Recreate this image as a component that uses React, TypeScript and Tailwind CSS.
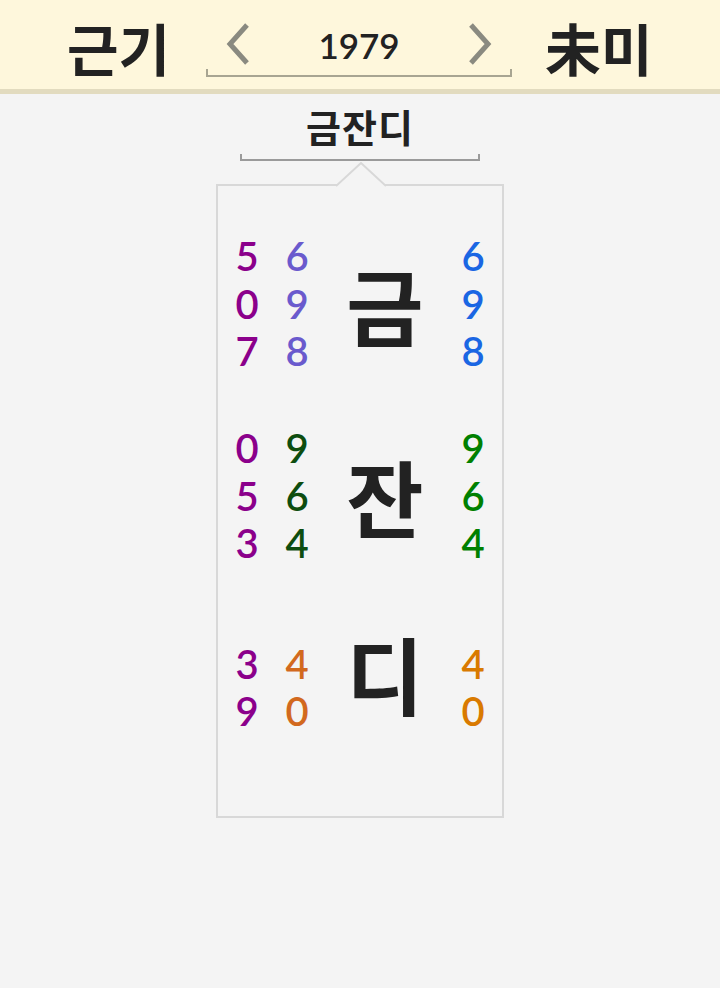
import React from "react";

type Syllable = {
  char: string;
  left: string[];
  mid: string[];
  right: string[];
  midColor: string;
  rightColor: string;
  shift: string;
};

const rows: Syllable[] = [
  { char: "금", left: ["5", "0", "7"], mid: ["6", "9", "8"], right: ["6", "9", "8"], midColor: "text-[#6a5acd]", rightColor: "text-[#1a66e3]", shift: "" },
  { char: "잔", left: ["0", "5", "3"], mid: ["9", "6", "4"], right: ["9", "6", "4"], midColor: "text-[#0d4d0f]", rightColor: "text-[#008000]", shift: "" },
  { char: "디", left: ["3", "9"], mid: ["4", "0"], right: ["4", "0"], midColor: "text-[#d2691e]", rightColor: "text-[#d97a00]", shift: "-translate-y-[15px]" },
];

const KR = { fontFamily: '"Noto Sans CJK KR", "Noto Sans", sans-serif' };
const NUM = { fontFamily: 'Lato, "Noto Sans", sans-serif' };

function Digits({ list, color }: { list: string[]; color: string }) {
  return (
    <div className={`flex flex-col items-center text-[40px] font-semibold leading-[47.5px] ${color}`} style={NUM}>
      {list.map((d, i) => (
        <span key={i}>{d}</span>
      ))}
    </div>
  );
}

function Chevron({ dir }: { dir: "left" | "right" }) {
  return (
    <svg width="26" height="44" viewBox="0 0 26 44">
      <polyline
        points={dir === "left" ? "22,3 5,22 22,41" : "4,3 21,22 4,41"}
        fill="none"
        stroke="#8a8a80"
        strokeWidth="5"
      />
    </svg>
  );
}

export default function App() {
  return (
    <div className="w-[720px] h-[988px] bg-[#f4f4f4] flex flex-col items-center" style={KR}>
      {/* 상단 바 */}
      <header className="w-full h-[94px] bg-[#fef7dc] border-b-[5px] border-[#e2dbbf] flex items-start justify-center gap-[33px] pt-[19px]">
        <div className="w-[106px] text-[56px] font-bold leading-none text-[#222] whitespace-nowrap">근기</div>
        <div className="w-[306px] flex flex-col">
          <div className="h-[50px] flex items-center justify-between px-[19px]">
            <Chevron dir="left" />
            <span className="text-[35px] font-semibold text-[#222] leading-none pt-[2px]" style={NUM}>1979</span>
            <Chevron dir="right" />
          </div>
          <div className="h-[8px] border-x-2 border-b-2 border-[#a8a592]" />
        </div>
        <div className="w-[108px] text-[56px] font-bold leading-none text-[#222] whitespace-nowrap">未미</div>
      </header>

      {/* 이름 */}
      <div className="mt-[4px] w-[240px] flex flex-col items-center">
        <div className="text-[38px] font-bold leading-[56px] text-[#222] tracking-[1px]">금잔디</div>
        <div className="w-full h-[7px] border-x-2 border-b-2 border-[#9a9a9a]" />
      </div>

      {/* 카드 */}
      <div className="relative mt-[23px] w-[288px] h-[634px] border-2 border-[#d8d8d8] pt-[47px] px-[4px] flex flex-col gap-[50px]">
        <svg className="absolute -top-[24px] left-[118px]" width="50" height="26" viewBox="0 0 50 26">
          <polygon points="0,24 25,1 50,24" fill="#f4f4f4" />
          <polyline points="0,24 25,1 50,24" fill="none" stroke="#d8d8d8" strokeWidth="2" />
        </svg>
        {rows.map((r) => (
          <div key={r.char} className="grid grid-cols-[50px_50px_126px_50px] h-[142px] items-center">
            <Digits list={r.left} color="text-[#8b008b]" />
            <Digits list={r.mid} color={r.midColor} />
            <div className={`text-center text-[84px] font-bold leading-none text-[#222] ${r.shift}`}>{r.char}</div>
            <Digits list={r.right} color={r.rightColor} />
          </div>
        ))}
      </div>
    </div>
  );
}
